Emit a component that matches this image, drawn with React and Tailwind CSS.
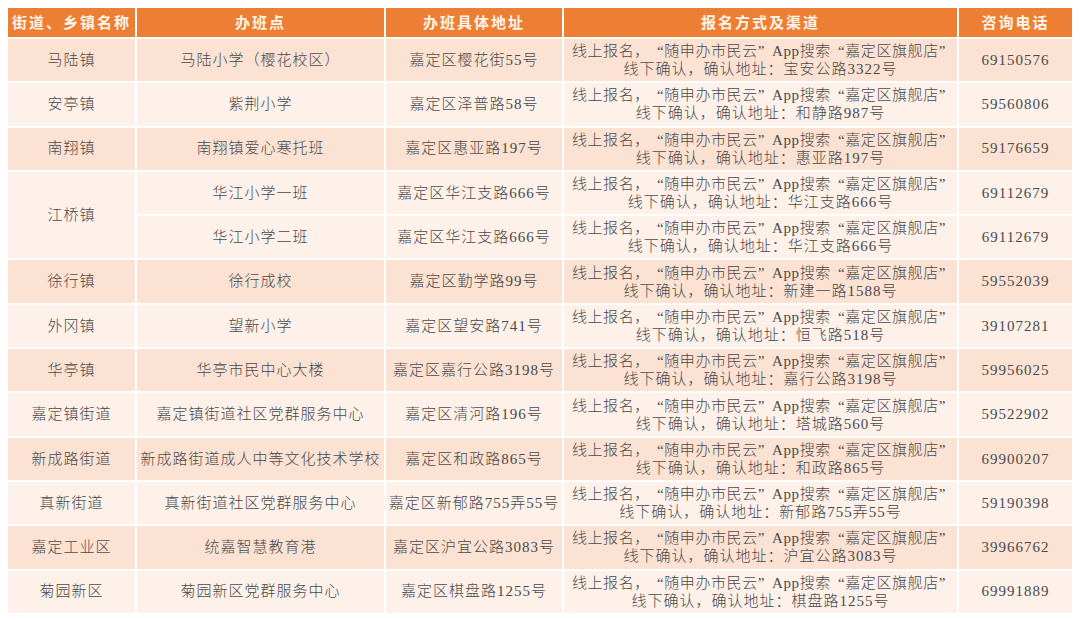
import React from "react";

const rows = [
  { town: "马陆镇", site: "马陆小学（樱花校区）", addr: "嘉定区樱花街55号", off: "宝安公路3322号", tel: "69150576", dark: true },
  { town: "安亭镇", site: "紫荆小学", addr: "嘉定区泽普路58号", off: "和静路987号", tel: "59560806", dark: false },
  { town: "南翔镇", site: "南翔镇爱心寒托班", addr: "嘉定区惠亚路197号", off: "惠亚路197号", tel: "59176659", dark: true },
  { town: "江桥镇", span: true, site: "华江小学一班", addr: "嘉定区华江支路666号", off: "华江支路666号", tel: "69112679", dark: false },
  { town: null, site: "华江小学二班", addr: "嘉定区华江支路666号", off: "华江支路666号", tel: "69112679", dark: false },
  { town: "徐行镇", site: "徐行成校", addr: "嘉定区勤学路99号", off: "新建一路1588号", tel: "59552039", dark: true },
  { town: "外冈镇", site: "望新小学", addr: "嘉定区望安路741号", off: "恒飞路518号", tel: "39107281", dark: false },
  { town: "华亭镇", site: "华亭市民中心大楼", addr: "嘉定区嘉行公路3198号", off: "嘉行公路3198号", tel: "59956025", dark: true },
  { town: "嘉定镇街道", site: "嘉定镇街道社区党群服务中心", addr: "嘉定区清河路196号", off: "塔城路560号", tel: "59522902", dark: false },
  { town: "新成路街道", site: "新成路街道成人中等文化技术学校", addr: "嘉定区和政路865号", off: "和政路865号", tel: "69900207", dark: true },
  { town: "真新街道", site: "真新街道社区党群服务中心", addr: "嘉定区新郁路755弄55号", off: "新郁路755弄55号", tel: "59190398", dark: false },
  { town: "嘉定工业区", site: "统嘉智慧教育港", addr: "嘉定区沪宜公路3083号", off: "沪宜公路3083号", tel: "39966762", dark: true },
  { town: "菊园新区", site: "菊园新区党群服务中心", addr: "嘉定区棋盘路1255号", off: "棋盘路1255号", tel: "69991889", dark: false },
];

const DARK = "bg-[#fbe2d3]";
const LIGHT = "bg-[#fdf1ea]";

function Cell({ dark, className = "", children }) {
  return (
    <div className={`${dark ? DARK : LIGHT} flex flex-col items-center justify-center text-center ${className}`}>
      {children}
    </div>
  );
}

function Head({ children }) {
  return (
    <div className="bg-[#ec7f33] flex items-center justify-center text-[#fff4ea] text-[15px] font-bold tracking-[2px]" style={{ fontFamily: '"Noto Sans CJK SC", sans-serif' }}>
      {children}
    </div>
  );
}

export default function App() {
  const cells = [];
  rows.forEach((r, i) => {
    if (r.town !== null) {
      cells.push(
        <Cell key={`t${i}`} dark={r.dark} className={r.span ? "row-span-2" : ""}>
          {r.town}
        </Cell>
      );
    }
    cells.push(<Cell key={`s${i}`} dark={r.dark}>{r.site}</Cell>);
    cells.push(<Cell key={`a${i}`} dark={r.dark}>{r.addr}</Cell>);
    cells.push(
      <Cell key={`c${i}`} dark={r.dark} className="leading-[18px]">
        <div className="tracking-[0.6px]">
          线上报名，<span className="ml-[7px]">“</span>随申办市民云<span className="mr-[7px]">”</span>App搜索<span className="ml-[7px]">“</span>嘉定区旗舰店<span className="mr-[3px]">”</span>
        </div>
        <div>线下确认，确认地址：{r.off}</div>
      </Cell>
    );
    cells.push(<Cell key={`p${i}`} dark={r.dark} className="tracking-[1px]">{r.tel}</Cell>);
  });

  return (
    <div className="w-[1080px] h-[620px] bg-white p-2">
      <div
        className="grid grid-cols-[127px_247px_176px_393px_113px] grid-rows-[29px_repeat(13,42.3px)] gap-[2px] bg-white text-[15px] font-light text-[#4a4a4a] tracking-[1px]"
        style={{ fontFamily: '"Liberation Serif", "Noto Sans CJK SC", serif' }}
      >
        <Head>街道、乡镇名称</Head>
        <Head>办班点</Head>
        <Head>办班具体地址</Head>
        <Head>报名方式及渠道</Head>
        <Head>咨询电话</Head>
        {cells}
      </div>
    </div>
  );
}
